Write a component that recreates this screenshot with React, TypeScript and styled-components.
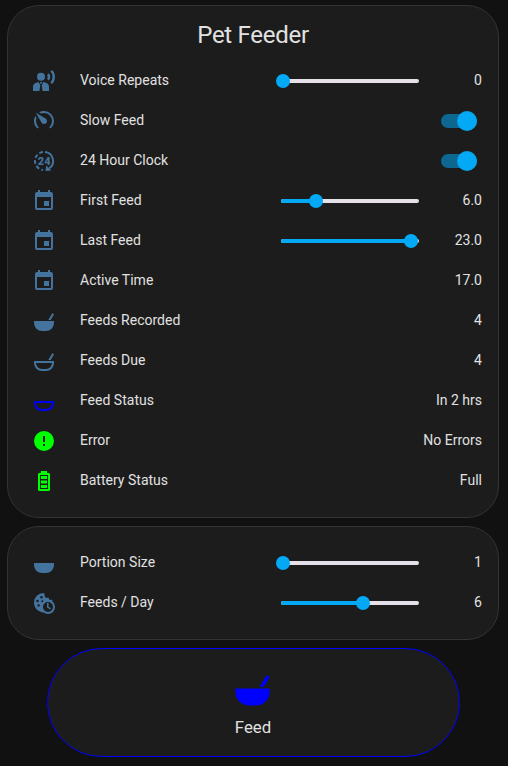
import React from "react";
import styled, { createGlobalStyle } from "styled-components";

const GlobalStyle = createGlobalStyle`
  * { box-sizing: border-box; }
  html, body { margin: 0; background: #111111; }
  body { font-family: Roboto, "Liberation Sans", sans-serif; color: #e1e1e1; }
`;

const Page = styled.main`
  display: flex;
  flex-direction: column;
  gap: 8px;
  width: 508px;
  height: 766px;
  padding: 5px 9px 0 7px;
`;

const Card = styled.section<{ $height: number; $top: number }>`
  height: ${(p) => p.$height}px;
  padding: ${(p) => p.$top}px 16px 0;
  border: 1px solid #333333;
  border-radius: 32px;
  background: #1c1c1c;
`;

const Title = styled.h1`
  margin: 0;
  height: 54px;
  padding-top: 5px;
  font-size: 24px;
  font-weight: 400;
  line-height: 48px;
  letter-spacing: -0.288px;
  text-align: center;
`;

const Row = styled.div`
  display: flex;
  align-items: center;
  height: 40px;
  font-size: 14px;
  line-height: 20px;
  letter-spacing: 0.01px;
`;

const IconSlot = styled.span<{ $color: string }>`
  display: flex;
  justify-content: center;
  width: 40px;
  margin-right: 16px;
  padding-top: 2px;
  color: ${(p) => p.$color};
`;

const Glyph = styled.svg<{ $size: number }>`
  display: block;
  width: ${(p) => p.$size}px;
  height: ${(p) => p.$size}px;
  fill: currentColor;
`;

const Label = styled.span`
  flex: 1;
`;

const Value = styled.span`
  min-width: 63px;
  text-align: right;
`;

const Track = styled.span`
  position: relative;
  width: 138px;
  height: 4px;
  margin-top: 2px;
  border-radius: 2px;
  background: #e6e0e9;
`;

const Fill = styled.span`
  display: block;
  height: 4px;
  border-radius: 2px 0 0 2px;
  background: #03a9f4;
`;

const Knob = styled.span`
  position: absolute;
  top: -5px;
  width: 14px;
  height: 14px;
  margin-left: -7px;
  border-radius: 50%;
  background: #03a9f4;
`;

const Switch = styled.span`
  display: flex;
  align-items: center;
  justify-content: flex-end;
  width: 36px;
  height: 14px;
  margin: 2px 5px 0 0;
  border-radius: 7px;
  background: #0e6791;
`;

const SwitchThumb = styled.span`
  width: 20px;
  height: 20px;
  flex: none;
  border-radius: 50%;
  background: #03a9f4;
`;

const FeedButton = styled.button`
  display: flex;
  flex-direction: column;
  align-items: center;
  align-self: center;
  width: 413px;
  height: 109px;
  padding: 19px 0 0;
  border: 1px solid #0000ff;
  border-radius: 55px;
  background: #1c1c1c;
  color: #e1e1e1;
  font: 400 16.8px/20px Roboto, sans-serif;
`;

const FeedIcon = styled.span`
  height: 49px;
  margin-right: 1px;
  color: #0000ff;
`;

type IconName =
  | "voice" | "slow" | "hours" | "calendar" | "bowlMix" | "bowlMixOutline"
  | "bowlOutline" | "bowl" | "alert" | "battery" | "cookie";

const bowl = "M2 12H22V14A8 8 0 0 1 14 22H10A8 8 0 0 1 2 14Z";
const bowlOutline = "M4 14A6 6 0 0 0 10 20H14A6 6 0 0 0 20 14ZM2 12H22V14A8 8 0 0 1 14 22H10A8 8 0 0 1 2 14Z";
const spoon = "M20.2 4.2L22.1 5.3L18.7 11H16.3Z";

const drawings: Record<IconName, React.ReactNode> = {
  voice: (
    <>
      <circle cx="9" cy="7.8" r="4" />
      <path d="M5.6 13.2C2.8 13.9 1 15.4 1 17.5V22H7.4L8.3 16.2L6.6 13ZM12.4 13.2C15.2 13.9 17 15.4 17 17.5V22H10.6L9.7 16.2L11.4 13ZM7.9 13H10.1L9.6 14.8H8.4Z" />
      <path d="M16.8 4.2C18.8 6.4 18.8 9.4 16.8 11.6L15.1 9.9C15.9 8.8 15.9 7.1 15.1 5.9ZM20.1 1C24 5.1 24 11.1 20.1 15L18.4 13.4C21.2 10.2 21.2 5.7 18.4 2.6Z" />
    </>
  ),
  slow: (
    <path transform="translate(24 -1) scale(-1 1)" d="M12,16A3,3 0 0,1 9,13C9,11.88 9.61,10.9 10.5,10.39L20.21,4.77L14.68,14.35C14.18,15.33 13.17,16 12,16M12,3C13.81,3 15.5,3.5 16.97,4.32L14.87,5.53C14,5.19 13,5 12,5A8,8 0 0,0 4,13C4,15.21 4.89,17.21 6.34,18.65H6.35C6.74,19.04 6.74,19.67 6.35,20.06C5.96,20.45 5.32,20.45 4.93,20.07C3.12,18.26 2,15.76 2,13A10,10 0 0,1 12,3M22,13C22,15.76 20.88,18.26 19.07,20.07C18.68,20.45 18.05,20.45 17.66,20.06C17.27,19.67 17.27,19.04 17.66,18.65C19.11,17.2 20,15.21 20,13C20,12 19.81,11 19.46,10.1L20.67,8C21.5,9.5 22,11.18 22,13Z" />
  ),
  hours: (
    <>
      <path fill="none" stroke="currentColor" strokeWidth="2" d="M13 3.05A9 9 0 0 1 17.2 19.4" />
      <path fill="none" stroke="currentColor" strokeWidth="2" strokeDasharray="3.9 2.2" d="M11 3.05A9 9 0 0 0 11 20.95" />
      <path d="M13.5 22L14.2 16.5L19.4 21.5Z" />
      <text x="12.2" y="15.8" textAnchor="middle" fontFamily="Roboto, sans-serif" fontSize="11" fontWeight="900">24</text>
    </>
  ),
  calendar: <path d="M19,19H5V8H19M16,1V3H8V1H6V3H5C3.89,3 3,3.89 3,5V19A2,2 0 0,0 5,21H19A2,2 0 0,0 21,19V5C21,3.89 20.1,3 19,3H18V1M17,12H12V17H17V12Z" />,
  bowlMix: <path d={bowl + spoon} />,
  bowlMixOutline: <path fillRule="evenodd" d={bowlOutline + spoon} />,
  bowlOutline: <path fillRule="evenodd" d={bowlOutline} />,
  bowl: <path d={bowl} />,
  alert: <path d="M13,13H11V7H13M13,17H11V15H13M12,2A10,10 0 0,0 2,12A10,10 0 0,0 12,22A10,10 0 0,0 22,12A10,10 0 0,0 12,2Z" />,
  battery: <path d="M16 20H8V6H16M16.67 4H15V2H9V4H7.33C6.6 4 6 4.6 6 5.33V20.67C6 21.4 6.6 22 7.33 22H16.67C17.41 22 18 21.41 18 20.67V5.33C18 4.6 17.4 4 16.67 4M15 16H9V19H15V16M15 7H9V10H15V7M15 11.5H9V14.5H15V11.5Z" />,
  cookie: (
    <>
      <path fillRule="evenodd" d="M11.5 2A9.5 9.5 0 0 0 2 11.5C2 17 6 21 12 21.6L17 16L20.5 10V9.5C19.5 8.5 18.3 9 17.5 8.9C16.8 8.5 17.3 7.3 16.5 6.8C15.5 6.3 14.3 7.2 13.4 6.5C12.3 5.4 13 3.5 12 2ZM9.5 5A1.3 1.3 0 1 1 9.5 7.6A1.3 1.3 0 0 1 9.5 5ZM5.5 8.7A1.3 1.3 0 1 1 5.5 11.3A1.3 1.3 0 0 1 5.5 8.7ZM10.3 9.3A1 1 0 1 1 10.3 11.3A1 1 0 0 1 10.3 9.3ZM6.6 13.2A1.2 1.2 0 1 1 6.6 15.6A1.2 1.2 0 0 1 6.6 13.2Z" />
      <circle cx="16" cy="16" r="6" fill="#1c1c1c" stroke="currentColor" strokeWidth="2" />
      <path d="M15 12H16.5V15.8L19 17.3L18.3 18.5L15 16.5Z" />
    </>
  ),
};

function Icon({ name, size = 24 }: { name: IconName; size?: number }) {
  return <Glyph $size={size} viewBox="0 0 24 24" aria-hidden="true">{drawings[name]}</Glyph>;
}

function Slider({ at }: { at: number }) {
  return (
    <Track>
      <Fill style={{ width: at }} />
      <Knob style={{ left: at }} />
    </Track>
  );
}

interface Entity {
  icon: IconName;
  label: string;
  value?: string;
  color?: string;
  slider?: number;
}

const schedule: Entity[] = [
  { icon: "voice", label: "Voice Repeats", value: "0", slider: 2 },
  { icon: "slow", label: "Slow Feed" },
  { icon: "hours", label: "24 Hour Clock" },
  { icon: "calendar", label: "First Feed", value: "6.0", slider: 35 },
  { icon: "calendar", label: "Last Feed", value: "23.0", slider: 130 },
  { icon: "calendar", label: "Active Time", value: "17.0" },
  { icon: "bowlMix", label: "Feeds Recorded", value: "4" },
  { icon: "bowlMixOutline", label: "Feeds Due", value: "4" },
  { icon: "bowlOutline", label: "Feed Status", value: "In 2 hrs", color: "#0000ff" },
  { icon: "alert", label: "Error", value: "No Errors", color: "#00ff00" },
  { icon: "battery", label: "Battery Status", value: "Full", color: "#00ff00" },
];

const portions: Entity[] = [
  { icon: "bowl", label: "Portion Size", value: "1", slider: 2 },
  { icon: "cookie", label: "Feeds / Day", value: "6", slider: 82 },
];

function EntityRow({ icon, label, value, color = "#44739e", slider }: Entity) {
  return (
    <Row>
      <IconSlot $color={color}><Icon name={icon} /></IconSlot>
      <Label>{label}</Label>
      {slider !== undefined && <Slider at={slider} />}
      {value !== undefined ? <Value>{value}</Value> : <Switch><SwitchThumb /></Switch>}
    </Row>
  );
}

export default function App() {
  return (
    <>
      <GlobalStyle />
      <Page>
        <Card $height={513} $top={0}>
          <Title>Pet Feeder</Title>
          {schedule.map((e) => <EntityRow key={e.label} {...e} />)}
        </Card>
        <Card $height={114} $top={15}>
          {portions.map((e) => <EntityRow key={e.label} {...e} />)}
        </Card>
        <FeedButton>
          <FeedIcon><Icon name="bowlMix" size={41} /></FeedIcon>
          Feed
        </FeedButton>
      </Page>
    </>
  );
}
